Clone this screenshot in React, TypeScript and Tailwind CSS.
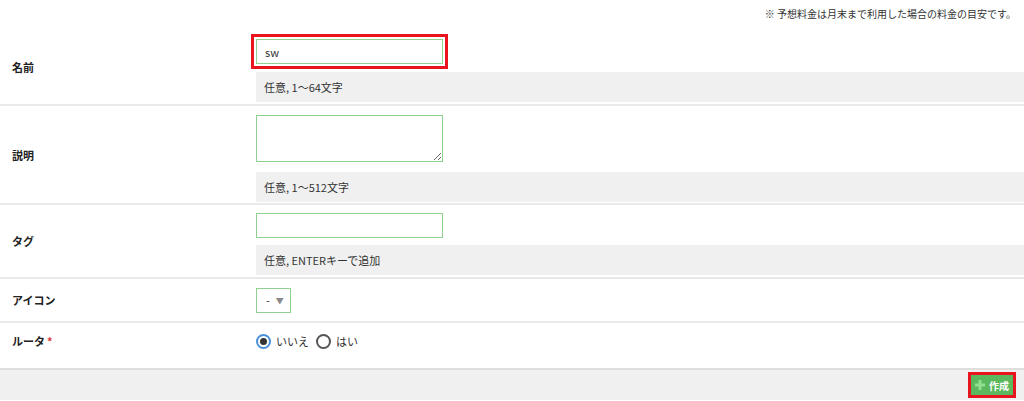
const font = { fontFamily: '"Noto Sans CJK JP", "Liberation Sans", sans-serif' };

function Help({ children }: { children: React.ReactNode }) {
  return (
    <div className="flex h-[30px] items-center bg-[#f0f0f0] pl-2 text-[11px] text-[#333]">
      {children}
    </div>
  );
}

function Label({ children, flat }: { children: React.ReactNode; flat?: boolean }) {
  return (
    <div className={`w-[256px] shrink-0 pl-3 text-[11px] font-bold text-[#222] ${flat ? "" : "pb-[6px]"}`}>
      {children}
    </div>
  );
}

function Radio({ checked, label }: { checked?: boolean; label: string }) {
  return (
    <label className="flex items-center gap-[5px]">
      <span
        className={`flex h-[15px] w-[15px] items-center justify-center rounded-full border-2 ${
          checked ? "border-[#4a90d9]" : "border-[#555]"
        } bg-white`}
      >
        {checked && <span className="h-[7px] w-[7px] rounded-full bg-[#333]" />}
      </span>
      <span className="text-[11px] text-[#333]">{label}</span>
    </label>
  );
}

export default function App() {
  return (
    <div className="w-[1024px] h-[401px] overflow-hidden bg-white" style={font}>
      {/* note */}
      <div className="flex h-[27px] items-center justify-end pr-2 text-[10px] text-[#333]">
        ※ 予想料金は月末まで利用した場合の料金の目安です。
      </div>

      {/* 名前 */}
      <div className="flex items-center border-b-2 border-[#e9e9e9] pt-3 pb-[2px]">
        <Label>名前</Label>
        <div className="flex flex-1 flex-col gap-2">
          <input
            defaultValue="sw"
            className="h-[25px] w-[187px] border border-[#8fd18f] px-2 text-[11px] text-[#333] outline-3 outline-offset-2 outline-[#e8141e]"
          />
          <Help>任意, 1〜64文字</Help>
        </div>
      </div>

      {/* 説明 */}
      <div className="flex items-center border-b-2 border-[#e9e9e9] pt-[9px] pb-[1px]">
        <Label>説明</Label>
        <div className="flex flex-1 flex-col gap-[10px]">
          <textarea className="block h-[47px] w-[187px] border border-[#8fd18f] px-2 text-[11px] outline-none" />
          <Help>任意, 1〜512文字</Help>
        </div>
      </div>

      {/* タグ */}
      <div className="flex items-center border-b-2 border-[#e9e9e9] pt-[8px] pb-[2px]">
        <Label>タグ</Label>
        <div className="flex flex-1 flex-col gap-[7px]">
          <input className="h-[25px] w-[187px] border border-[#8fd18f] px-2 text-[11px] outline-none" />
          <Help>任意, ENTERキーで追加</Help>
        </div>
      </div>

      {/* アイコン */}
      <div className="flex items-center border-b-2 border-[#e9e9e9] pt-[9px] pb-[8px]">
        <Label flat>アイコン</Label>
        <div className="flex h-[25px] w-[35px] items-center gap-[6px] border border-[#8fd18f] pl-[9px] text-[11px] text-[#333]">
          <span>-</span>
          <span className="text-[8px] text-[#888]">▼</span>
        </div>
      </div>

      {/* ルータ */}
      <div className="flex h-[45px] items-start pt-[10px]">
        <Label>
          ルータ<span className="ml-[2px] text-[#e0383e]">*</span>
        </Label>
        <div className="flex items-center gap-[7px]">
          <Radio checked label="いいえ" />
          <Radio label="はい" />
        </div>
      </div>

      {/* footer */}
      <div className="flex h-[32px] items-center justify-end border-t-2 border-[#dedede] bg-[#f0f0f0] pr-2">
        <div className="border-3 border-[#e8141e]">
          <button className="flex h-[20px] w-[42px] items-center justify-center gap-[4px] bg-[#5cb85c] text-[10px] font-bold text-white">
            <svg width="10" height="10" viewBox="0 0 10 10" aria-hidden="true">
              <path d="M3.5 0h3v3.5H10v3H6.5V10h-3V6.5H0v-3h3.5z" fill="#8fe08f" />
            </svg>
            作成
          </button>
        </div>
      </div>
    </div>
  );
}
